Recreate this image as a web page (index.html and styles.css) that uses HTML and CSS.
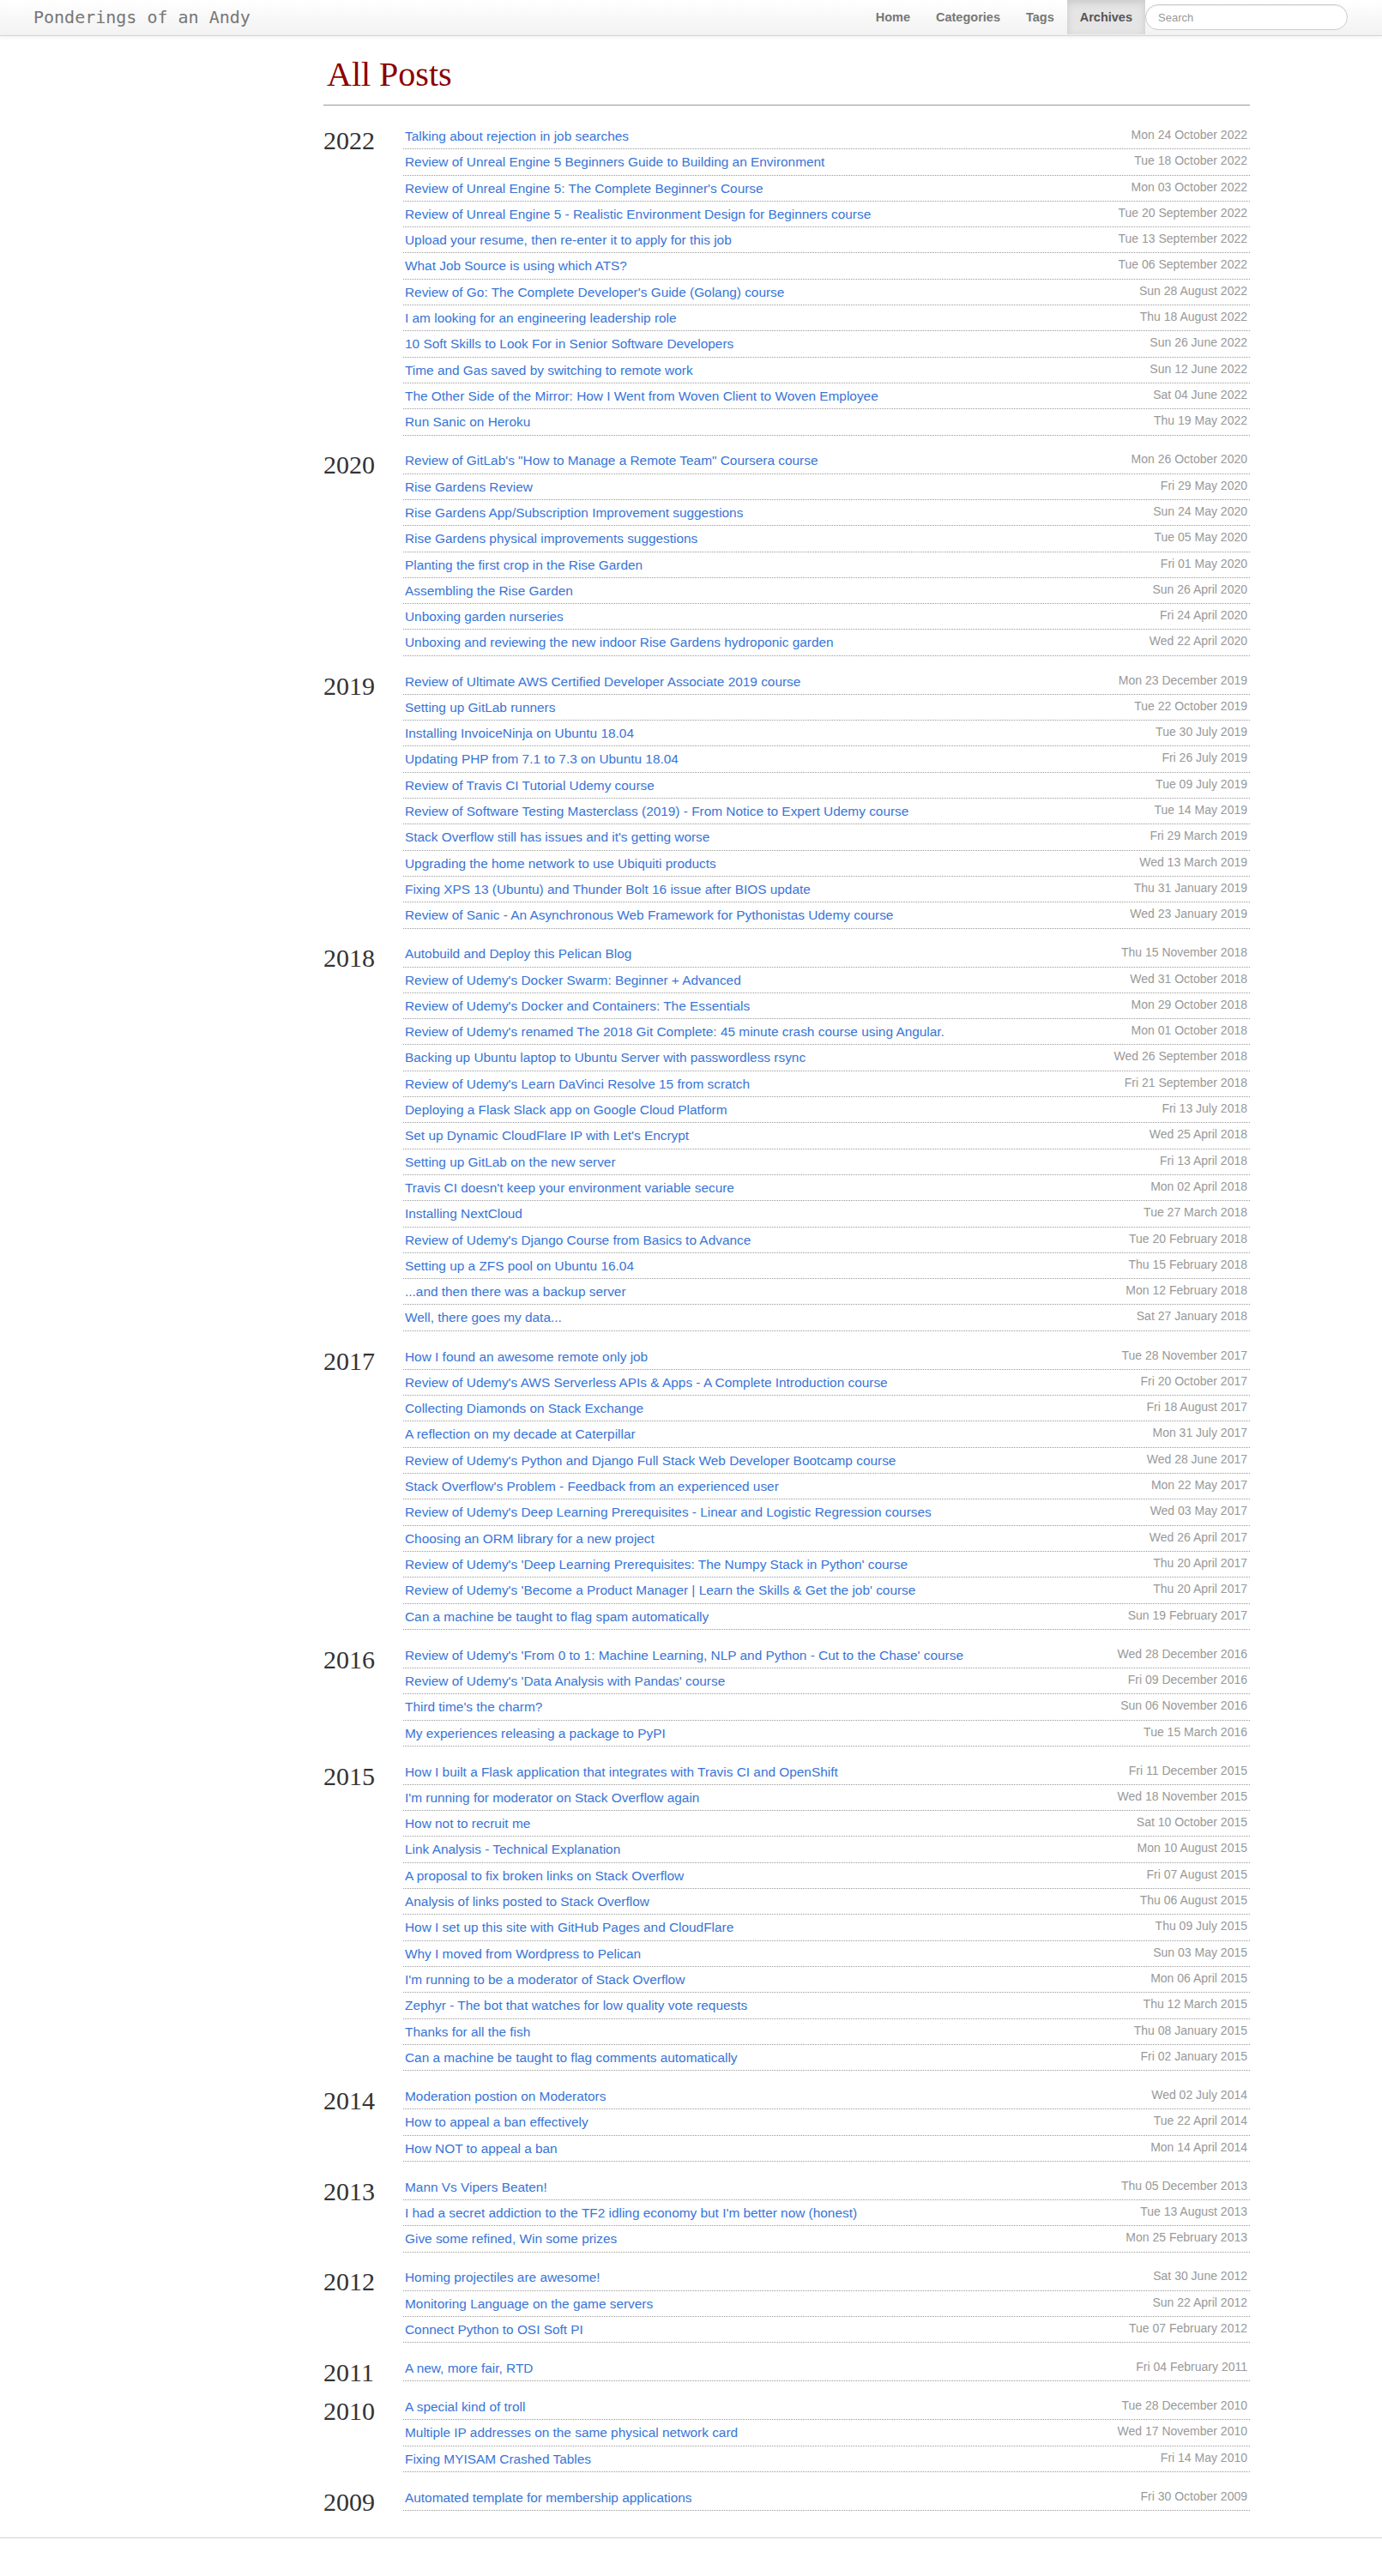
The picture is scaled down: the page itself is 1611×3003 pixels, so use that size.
FILE: index.html
```html
<!DOCTYPE html>
<html lang="en">
<head>
<meta charset="utf-8">
<title>All Posts - Ponderings of an Andy</title>
<link rel="stylesheet" href="styles.css">
</head>
<body>
<header class="navbar">
  <a class="brand" href="#">Ponderings of an Andy</a>
  <div class="nav-right">
    <ul class="nav">
      <li><a href="#">Home</a></li>
      <li><a href="#">Categories</a></li>
      <li><a href="#">Tags</a></li>
      <li class="active"><a href="#">Archives</a></li>
    </ul>
    <form class="search"><input type="text" placeholder="Search"></form>
  </div>
</header>

<main class="page">
  <header class="page-header"><h1>All Posts</h1></header>
  <section class="archive">
    <div class="year-group">
      <h2 class="year">2022</h2>
      <ul class="posts">
        <li><a href="#">Talking about rejection in job searches</a><time>Mon 24 October 2022</time></li>
        <li><a href="#">Review of Unreal Engine 5 Beginners Guide to Building an Environment</a><time>Tue 18 October 2022</time></li>
        <li><a href="#">Review of Unreal Engine 5: The Complete Beginner's Course</a><time>Mon 03 October 2022</time></li>
        <li><a href="#">Review of Unreal Engine 5 - Realistic Environment Design for Beginners course</a><time>Tue 20 September 2022</time></li>
        <li><a href="#">Upload your resume, then re-enter it to apply for this job</a><time>Tue 13 September 2022</time></li>
        <li><a href="#">What Job Source is using which ATS?</a><time>Tue 06 September 2022</time></li>
        <li><a href="#">Review of Go: The Complete Developer's Guide (Golang) course</a><time>Sun 28 August 2022</time></li>
        <li><a href="#">I am looking for an engineering leadership role</a><time>Thu 18 August 2022</time></li>
        <li><a href="#">10 Soft Skills to Look For in Senior Software Developers</a><time>Sun 26 June 2022</time></li>
        <li><a href="#">Time and Gas saved by switching to remote work</a><time>Sun 12 June 2022</time></li>
        <li><a href="#">The Other Side of the Mirror: How I Went from Woven Client to Woven Employee</a><time>Sat 04 June 2022</time></li>
        <li><a href="#">Run Sanic on Heroku</a><time>Thu 19 May 2022</time></li>
      </ul>
    </div>
    <div class="year-group">
      <h2 class="year">2020</h2>
      <ul class="posts">
        <li><a href="#">Review of GitLab's "How to Manage a Remote Team" Coursera course</a><time>Mon 26 October 2020</time></li>
        <li><a href="#">Rise Gardens Review</a><time>Fri 29 May 2020</time></li>
        <li><a href="#">Rise Gardens App/Subscription Improvement suggestions</a><time>Sun 24 May 2020</time></li>
        <li><a href="#">Rise Gardens physical improvements suggestions</a><time>Tue 05 May 2020</time></li>
        <li><a href="#">Planting the first crop in the Rise Garden</a><time>Fri 01 May 2020</time></li>
        <li><a href="#">Assembling the Rise Garden</a><time>Sun 26 April 2020</time></li>
        <li><a href="#">Unboxing garden nurseries</a><time>Fri 24 April 2020</time></li>
        <li><a href="#">Unboxing and reviewing the new indoor Rise Gardens hydroponic garden</a><time>Wed 22 April 2020</time></li>
      </ul>
    </div>
    <div class="year-group">
      <h2 class="year">2019</h2>
      <ul class="posts">
        <li><a href="#">Review of Ultimate AWS Certified Developer Associate 2019 course</a><time>Mon 23 December 2019</time></li>
        <li><a href="#">Setting up GitLab runners</a><time>Tue 22 October 2019</time></li>
        <li><a href="#">Installing InvoiceNinja on Ubuntu 18.04</a><time>Tue 30 July 2019</time></li>
        <li><a href="#">Updating PHP from 7.1 to 7.3 on Ubuntu 18.04</a><time>Fri 26 July 2019</time></li>
        <li><a href="#">Review of Travis CI Tutorial Udemy course</a><time>Tue 09 July 2019</time></li>
        <li><a href="#">Review of Software Testing Masterclass (2019) - From Notice to Expert Udemy course</a><time>Tue 14 May 2019</time></li>
        <li><a href="#">Stack Overflow still has issues and it's getting worse</a><time>Fri 29 March 2019</time></li>
        <li><a href="#">Upgrading the home network to use Ubiquiti products</a><time>Wed 13 March 2019</time></li>
        <li><a href="#">Fixing XPS 13 (Ubuntu) and Thunder Bolt 16 issue after BIOS update</a><time>Thu 31 January 2019</time></li>
        <li><a href="#">Review of Sanic - An Asynchronous Web Framework for Pythonistas Udemy course</a><time>Wed 23 January 2019</time></li>
      </ul>
    </div>
    <div class="year-group">
      <h2 class="year">2018</h2>
      <ul class="posts">
        <li><a href="#">Autobuild and Deploy this Pelican Blog</a><time>Thu 15 November 2018</time></li>
        <li><a href="#">Review of Udemy's Docker Swarm: Beginner + Advanced</a><time>Wed 31 October 2018</time></li>
        <li><a href="#">Review of Udemy's Docker and Containers: The Essentials</a><time>Mon 29 October 2018</time></li>
        <li><a href="#">Review of Udemy's renamed The 2018 Git Complete: 45 minute crash course using Angular.</a><time>Mon 01 October 2018</time></li>
        <li><a href="#">Backing up Ubuntu laptop to Ubuntu Server with passwordless rsync</a><time>Wed 26 September 2018</time></li>
        <li><a href="#">Review of Udemy's Learn DaVinci Resolve 15 from scratch</a><time>Fri 21 September 2018</time></li>
        <li><a href="#">Deploying a Flask Slack app on Google Cloud Platform</a><time>Fri 13 July 2018</time></li>
        <li><a href="#">Set up Dynamic CloudFlare IP with Let's Encrypt</a><time>Wed 25 April 2018</time></li>
        <li><a href="#">Setting up GitLab on the new server</a><time>Fri 13 April 2018</time></li>
        <li><a href="#">Travis CI doesn't keep your environment variable secure</a><time>Mon 02 April 2018</time></li>
        <li><a href="#">Installing NextCloud</a><time>Tue 27 March 2018</time></li>
        <li><a href="#">Review of Udemy's Django Course from Basics to Advance</a><time>Tue 20 February 2018</time></li>
        <li><a href="#">Setting up a ZFS pool on Ubuntu 16.04</a><time>Thu 15 February 2018</time></li>
        <li><a href="#">...and then there was a backup server</a><time>Mon 12 February 2018</time></li>
        <li><a href="#">Well, there goes my data...</a><time>Sat 27 January 2018</time></li>
      </ul>
    </div>
    <div class="year-group">
      <h2 class="year">2017</h2>
      <ul class="posts">
        <li><a href="#">How I found an awesome remote only job</a><time>Tue 28 November 2017</time></li>
        <li><a href="#">Review of Udemy's AWS Serverless APIs &amp; Apps - A Complete Introduction course</a><time>Fri 20 October 2017</time></li>
        <li><a href="#">Collecting Diamonds on Stack Exchange</a><time>Fri 18 August 2017</time></li>
        <li><a href="#">A reflection on my decade at Caterpillar</a><time>Mon 31 July 2017</time></li>
        <li><a href="#">Review of Udemy's Python and Django Full Stack Web Developer Bootcamp course</a><time>Wed 28 June 2017</time></li>
        <li><a href="#">Stack Overflow's Problem - Feedback from an experienced user</a><time>Mon 22 May 2017</time></li>
        <li><a href="#">Review of Udemy's Deep Learning Prerequisites - Linear and Logistic Regression courses</a><time>Wed 03 May 2017</time></li>
        <li><a href="#">Choosing an ORM library for a new project</a><time>Wed 26 April 2017</time></li>
        <li><a href="#">Review of Udemy's 'Deep Learning Prerequisites: The Numpy Stack in Python' course</a><time>Thu 20 April 2017</time></li>
        <li><a href="#">Review of Udemy's 'Become a Product Manager | Learn the Skills &amp; Get the job' course</a><time>Thu 20 April 2017</time></li>
        <li><a href="#">Can a machine be taught to flag spam automatically</a><time>Sun 19 February 2017</time></li>
      </ul>
    </div>
    <div class="year-group">
      <h2 class="year">2016</h2>
      <ul class="posts">
        <li><a href="#">Review of Udemy's 'From 0 to 1: Machine Learning, NLP and Python - Cut to the Chase' course</a><time>Wed 28 December 2016</time></li>
        <li><a href="#">Review of Udemy's 'Data Analysis with Pandas' course</a><time>Fri 09 December 2016</time></li>
        <li><a href="#">Third time's the charm?</a><time>Sun 06 November 2016</time></li>
        <li><a href="#">My experiences releasing a package to PyPI</a><time>Tue 15 March 2016</time></li>
      </ul>
    </div>
    <div class="year-group">
      <h2 class="year">2015</h2>
      <ul class="posts">
        <li><a href="#">How I built a Flask application that integrates with Travis CI and OpenShift</a><time>Fri 11 December 2015</time></li>
        <li><a href="#">I'm running for moderator on Stack Overflow again</a><time>Wed 18 November 2015</time></li>
        <li><a href="#">How not to recruit me</a><time>Sat 10 October 2015</time></li>
        <li><a href="#">Link Analysis - Technical Explanation</a><time>Mon 10 August 2015</time></li>
        <li><a href="#">A proposal to fix broken links on Stack Overflow</a><time>Fri 07 August 2015</time></li>
        <li><a href="#">Analysis of links posted to Stack Overflow</a><time>Thu 06 August 2015</time></li>
        <li><a href="#">How I set up this site with GitHub Pages and CloudFlare</a><time>Thu 09 July 2015</time></li>
        <li><a href="#">Why I moved from Wordpress to Pelican</a><time>Sun 03 May 2015</time></li>
        <li><a href="#">I'm running to be a moderator of Stack Overflow</a><time>Mon 06 April 2015</time></li>
        <li><a href="#">Zephyr - The bot that watches for low quality vote requests</a><time>Thu 12 March 2015</time></li>
        <li><a href="#">Thanks for all the fish</a><time>Thu 08 January 2015</time></li>
        <li><a href="#">Can a machine be taught to flag comments automatically</a><time>Fri 02 January 2015</time></li>
      </ul>
    </div>
    <div class="year-group">
      <h2 class="year">2014</h2>
      <ul class="posts">
        <li><a href="#">Moderation postion on Moderators</a><time>Wed 02 July 2014</time></li>
        <li><a href="#">How to appeal a ban effectively</a><time>Tue 22 April 2014</time></li>
        <li><a href="#">How NOT to appeal a ban</a><time>Mon 14 April 2014</time></li>
      </ul>
    </div>
    <div class="year-group">
      <h2 class="year">2013</h2>
      <ul class="posts">
        <li><a href="#">Mann Vs Vipers Beaten!</a><time>Thu 05 December 2013</time></li>
        <li><a href="#">I had a secret addiction to the TF2 idling economy but I'm better now (honest)</a><time>Tue 13 August 2013</time></li>
        <li><a href="#">Give some refined, Win some prizes</a><time>Mon 25 February 2013</time></li>
      </ul>
    </div>
    <div class="year-group">
      <h2 class="year">2012</h2>
      <ul class="posts">
        <li><a href="#">Homing projectiles are awesome!</a><time>Sat 30 June 2012</time></li>
        <li><a href="#">Monitoring Language on the game servers</a><time>Sun 22 April 2012</time></li>
        <li><a href="#">Connect Python to OSI Soft PI</a><time>Tue 07 February 2012</time></li>
      </ul>
    </div>
    <div class="year-group">
      <h2 class="year">2011</h2>
      <ul class="posts">
        <li><a href="#">A new, more fair, RTD</a><time>Fri 04 February 2011</time></li>
      </ul>
    </div>
    <div class="year-group">
      <h2 class="year">2010</h2>
      <ul class="posts">
        <li><a href="#">A special kind of troll</a><time>Tue 28 December 2010</time></li>
        <li><a href="#">Multiple IP addresses on the same physical network card</a><time>Wed 17 November 2010</time></li>
        <li><a href="#">Fixing MYISAM Crashed Tables</a><time>Fri 14 May 2010</time></li>
      </ul>
    </div>
    <div class="year-group">
      <h2 class="year">2009</h2>
      <ul class="posts">
        <li><a href="#">Automated template for membership applications</a><time>Fri 30 October 2009</time></li>
      </ul>
    </div>
  </section>
</main>

<footer class="site-footer"></footer>
</body>
</html>
```

FILE: styles.css
```css
html, body {
  margin: 0;
  padding: 0;
  background: #ffffff;
}

body {
  font-family: "Liberation Sans", Arial, sans-serif;
  font-size: 14px;
  line-height: 20px;
  color: #333333;
}

/* ---------- Navbar ---------- */
.navbar {
  display: flex;
  justify-content: space-between;
  align-items: flex-start;
  height: 41px;
  padding: 0 40px 0 19px;
  background: linear-gradient(to bottom, #ffffff, #f2f2f2);
  border-bottom: 1px solid #d4d4d4;
  box-shadow: 0 1px 6px rgba(0, 0, 0, 0.07);
}

.brand {
  display: block;
  padding: 10px 20px;
  font-family: "DejaVu Sans Mono", "Liberation Mono", monospace;
  font-size: 20px;
  line-height: 20px;
  color: #777777;
  text-decoration: none;
}

.nav-right {
  display: flex;
  align-items: flex-start;
}

.nav {
  display: flex;
  margin: 0;
  padding: 0;
  list-style: none;
}

.nav a {
  display: block;
  padding: 10px 15px;
  font-size: 14.5px;
  font-weight: bold;
  line-height: 20px;
  color: #777777;
  text-decoration: none;
}

.nav .active a {
  color: #555555;
  background: #e5e5e5;
  box-shadow: inset 0 3px 8px rgba(0, 0, 0, 0.125);
}

.search {
  margin: 5px 0 0;
}

.search input {
  box-sizing: border-box;
  width: 236px;
  height: 30px;
  padding: 4px 14px;
  margin: 0;
  border: 1px solid #cccccc;
  border-radius: 15px;
  background: #ffffff;
  box-shadow: inset 0 1px 1px rgba(0, 0, 0, 0.075);
  font-family: "Liberation Sans", Arial, sans-serif;
  font-size: 13px;
  color: #555555;
  outline: none;
}

.search input::placeholder {
  color: #999999;
}

/* ---------- Page ---------- */
.page {
  width: 1080px;
  margin-left: 377px;
  padding-top: 25px;
  padding-bottom: 15.8px;
}

.page-header {
  padding-bottom: 15px;
  border-bottom: 1px solid #999999;
}

.page-header h1 {
  margin: 0;
  padding-left: 4px;
  font-family: "Liberation Serif", "Times New Roman", serif;
  font-size: 40px;
  font-weight: normal;
  line-height: 40px;
  color: #8b0000;
}

.archive {
  margin-top: 21px;
}

.year-group {
  display: flex;
  align-items: flex-start;
  margin-bottom: 14.8px;
}

.year {
  flex: 0 0 93px;
  margin: 0 0 -10px;
  font-family: "Liberation Serif", "Times New Roman", serif;
  font-size: 30px;
  font-weight: normal;
  line-height: 40px;
  color: #333333;
}

.posts {
  flex: 1;
  margin: 0;
  padding: 0;
  list-style: none;
}

.posts li {
  display: flex;
  justify-content: space-between;
  align-items: flex-start;
  padding: 5px 3px 4.3px 2px;
  border-bottom: 1px dotted #9a9a9a;
  line-height: 20px;
}

.posts a {
  font-size: 15.4px;
  line-height: 20px;
  color: #3875d7;
  text-decoration: none;
}

.posts time {
  font-size: 14px;
  line-height: 17px;
  color: #999999;
  white-space: nowrap;
}

/* ---------- Footer ---------- */
.site-footer {
  height: 44px;
  border-top: 1px solid #d0d0d0;
}
```
